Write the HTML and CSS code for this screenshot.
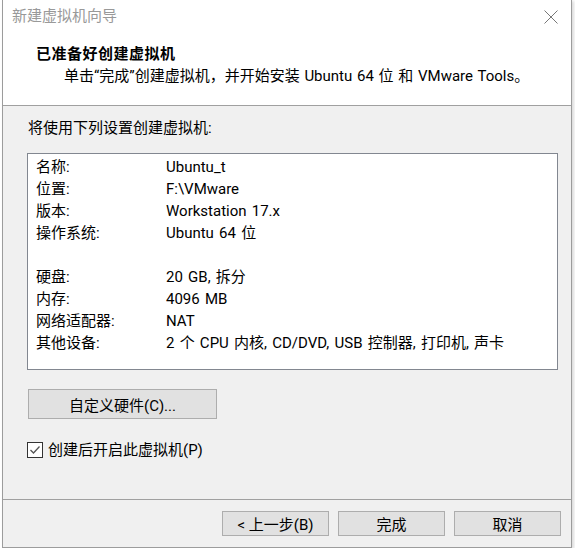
FILE: index.html
```html
<!DOCTYPE html>
<html lang="zh-CN">
<head>
<meta charset="utf-8">
<title>新建虚拟机向导</title>
<link rel="stylesheet" href="styles.css">
</head>
<body>
<div class="window">
  <div class="header">
    <div class="titlebar">
      <span class="title">新建虚拟机向导</span>
      <svg class="close" width="14" height="14" viewBox="0 0 14 14"><path d="M0.5 0.5 L13.5 13.5 M13.5 0.5 L0.5 13.5" stroke="#777" stroke-width="1" fill="none"/></svg>
    </div>
    <div class="intro">
      <div class="heading">已准备好创建虚拟机</div>
      <div class="sub">单击“完成”创建虚拟机，并开始安装 Ubuntu 64 位 和 VMware Tools。</div>
    </div>
  </div>
  <div class="body">
    <div class="lead">将使用下列设置创建虚拟机:</div>
    <div class="list">
      <div class="row"><span class="k">名称:</span><span class="v">Ubuntu_t</span></div>
      <div class="row"><span class="k">位置:</span><span class="v">F:\VMware</span></div>
      <div class="row"><span class="k">版本:</span><span class="v">Workstation 17.x</span></div>
      <div class="row"><span class="k">操作系统:</span><span class="v">Ubuntu 64 位</span></div>
      <div class="row"></div>
      <div class="row"><span class="k">硬盘:</span><span class="v">20 GB, 拆分</span></div>
      <div class="row"><span class="k">内存:</span><span class="v">4096 MB</span></div>
      <div class="row"><span class="k">网络适配器:</span><span class="v">NAT</span></div>
      <div class="row"><span class="k">其他设备:</span><span class="v">2 个 CPU 内核, CD/DVD, USB 控制器, 打印机, 声卡</span></div>
    </div>
    <button class="btn custom">自定义硬件(C)...</button>
    <label class="check">
      <span class="box"><svg width="14" height="14" viewBox="0 0 14 14"><path d="M2.5 7 L5.5 10 L11.5 3.5" stroke="#555" stroke-width="1.3" fill="none"/></svg></span>
      <span>创建后开启此虚拟机(P)</span>
    </label>
  </div>
  <div class="footer">
    <button class="btn">&lt; 上一步(B)</button>
    <button class="btn">完成</button>
    <button class="btn">取消</button>
  </div>
</div>
</body>
</html>
```

FILE: styles.css
```css
html, body {
  margin: 0;
  padding: 0;
  background: #ffffff;
}

.window {
  margin-left: 2px;
  width: 570px;
  height: 548px;
  box-sizing: border-box;
  border: 1px solid #9c9c9c;
  border-top: none;
  background: #f0f0f0;
  display: flex;
  flex-direction: column;
  font-family: Roboto, "Noto Sans CJK SC", sans-serif;
  font-size: 15px;
  color: #000;
  box-shadow: 2px 1px 3px rgba(0, 0, 0, 0.15);
}

.header {
  background: #ffffff;
  height: 106px;
  box-sizing: border-box;
  border-bottom: 1px solid #a0a0a0;
}

.titlebar {
  height: 32px;
  display: flex;
  align-items: center;
  padding-left: 9px;
  padding-right: 13px;
}

.title {
  color: #999999;
  line-height: 32px;
  flex: 1;
}

.close {
  display: block;
  margin-top: 1px;
}

.intro {
  padding: 11px 0 0 33px;
}

.heading {
  font-weight: bold;
  line-height: 22px;
  letter-spacing: 0.5px;
}

.sub {
  line-height: 22px;
  padding-left: 28px;
  word-spacing: 1px;
}

.body {
  flex: 1;
  padding: 11px 0 0 24px;
}

.lead {
  line-height: 22px;
  margin-left: 1px;
}

.list {
  margin-top: 14px;
  width: 531px;
  height: 217px;
  box-sizing: border-box;
  border: 1px solid #828790;
  background: #ffffff;
  padding: 2px 0 0 8px;
}

.row {
  display: flex;
  height: 22px;
  line-height: 22px;
  white-space: nowrap;
}

.k {
  width: 130px;
  flex: none;
}

.v {
  word-spacing: 1.5px;
}

.btn {
  font-family: inherit;
  font-size: 15px;
  color: #000;
  background: #e1e1e1;
  border: 1px solid #adadad;
  padding: 0;
  margin: 0;
  box-sizing: border-box;
}

.custom {
  display: block;
  margin-top: 19px;
  margin-left: 1px;
  width: 189px;
  height: 30px;
}

.check {
  margin-top: 20px;
  display: flex;
  align-items: center;
  height: 22px;
  line-height: 22px;
  gap: 5px;
}

.box {
  width: 16px;
  height: 16px;
  box-sizing: border-box;
  border: 1px solid #333333;
  background: #ffffff;
  display: flex;
  align-items: center;
  justify-content: center;
}

.box svg {
  display: block;
}

.footer {
  height: 48px;
  box-sizing: border-box;
  border-top: 1px solid #a0a0a0;
  display: flex;
  justify-content: flex-end;
  gap: 9px;
  padding: 11px 10px 0 0;
}

.footer .btn {
  width: 107px;
  height: 25px;
}
```
